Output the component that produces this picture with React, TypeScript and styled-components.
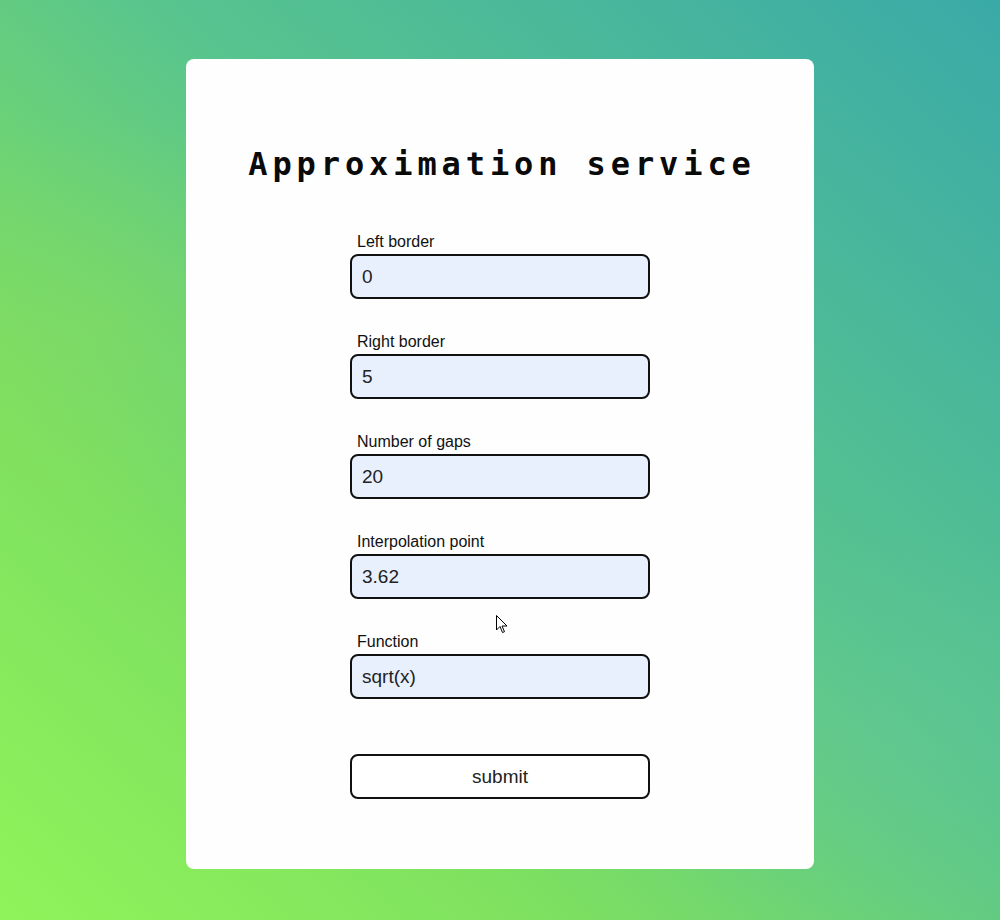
import React from "react";
import styled, { createGlobalStyle } from "styled-components";

const GlobalStyle = createGlobalStyle`
  html, body { margin: 0; padding: 0; }
  body {
    font-family: "Liberation Sans", Arial, sans-serif;
    min-height: 920px;
  }
  * { box-sizing: border-box; }
`;

const Page = styled.div`
  position: relative;
  min-height: 920px;
  padding-top: 59px;
  background:
    radial-gradient(ellipse 420px 300px at 90% 80%, rgba(100, 200, 150, 0.45), transparent 70%),
    radial-gradient(ellipse 400px 300px at 10% 35%, rgba(140, 220, 90, 0.35), transparent 70%),
    linear-gradient(to top right, #8ff45a 0%, #7ee060 28%, #58c48e 58%, #3aaaa8 100%);
  display: flex;
  justify-content: center;
  align-items: flex-start;
`;

const Card = styled.main`
  width: 628px;
  height: 810px;
  background: #fefefe;
  border-radius: 8px;
  padding-top: 86px;
  display: flex;
  flex-direction: column;
  align-items: center;
`;

const Title = styled.h1`
  margin: 0;
  font-family: "DejaVu Sans Mono", "Liberation Mono", monospace;
  font-weight: 700;
  font-size: 32px;
  letter-spacing: 4.9px;
  color: #0a0a0a;
  padding-left: 4px;
`;

const Form = styled.form`
  width: 300px;
  margin-top: 50px;
  display: flex;
  flex-direction: column;
  gap: 34px;
`;

const Field = styled.label`
  display: flex;
  flex-direction: column;
  gap: 3px;
`;

const LabelText = styled.span`
  font-size: 16px;
  line-height: 18px;
  padding-left: 7px;
  color: #111;
`;

const Input = styled.input`
  width: 300px;
  height: 45px;
  border: 2px solid #111;
  border-radius: 8px;
  background: #e8f0fe;
  font-family: "Liberation Sans", Arial, sans-serif;
  font-size: 19px;
  padding: 0 10px;
  color: #222;
  outline: none;
`;

const Submit = styled.button`
  margin-top: 21px;
  width: 300px;
  height: 45px;
  border: 2px solid #111;
  border-radius: 8px;
  background: #ffffff;
  font-family: "Liberation Sans", Arial, sans-serif;
  font-size: 19px;
  color: #222;
  cursor: pointer;
`;

const Cursor = styled.svg`
  position: absolute;
  left: 496px;
  top: 615px;
  pointer-events: none;
`;

const fields = [
  { label: "Left border", value: "0" },
  { label: "Right border", value: "5" },
  { label: "Number of gaps", value: "20" },
  { label: "Interpolation point", value: "3.62" },
  { label: "Function", value: "sqrt(x)" },
];

export default function App() {
  return (
    <>
      <GlobalStyle />
      <Page>
        <Card>
          <Title>Approximation service</Title>
          <Form onSubmit={(e) => e.preventDefault()}>
            {fields.map((f) => (
              <Field key={f.label}>
                <LabelText>{f.label}</LabelText>
                <Input defaultValue={f.value} />
              </Field>
            ))}
            <Submit type="submit">submit</Submit>
          </Form>
        </Card>
        <Cursor width="13" height="20" viewBox="0 0 13 20">
          <path
            d="M0.5 0.5 L0.5 15 L4 11.5 L6.5 17.5 L8.5 16.7 L6 11 L11 11 Z"
            fill="#fff"
            stroke="#000"
            strokeWidth="1"
            strokeLinejoin="round"
          />
        </Cursor>
      </Page>
    </>
  );
}
